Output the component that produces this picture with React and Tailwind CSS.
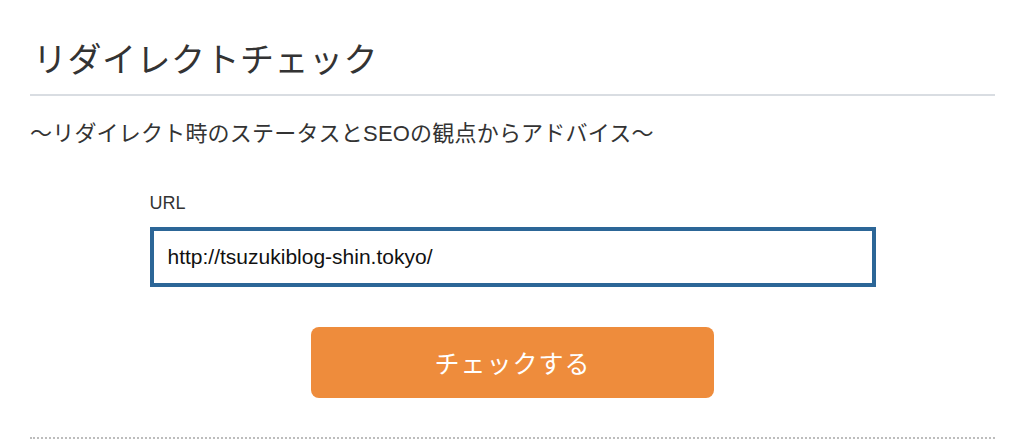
export default function App() {
  return (
    <div className="w-[1024px] h-[440px] overflow-hidden bg-white font-['Noto_Sans_CJK_JP','Noto_Sans',sans-serif]">
      <div className="ml-[30px] w-[965px]">
        <h1 className="h-[96px] pt-[32px] pb-[10px] pl-[3px] text-[34px] leading-[52px] font-normal tracking-[0.5px] text-[#333333] border-b-2 border-[#d9dde2]">
          リダイレクトチェック
        </h1>
        <p className="mt-[20px] flex h-[30px] items-baseline overflow-hidden text-[22px] leading-[30px] tracking-[0.2px] text-[#333333]">
          <span>〜リダイレクト時のステータスと</span>
          <span className="font-['Liberation_Sans',sans-serif]">SEO</span>
          <span>の観点からアドバイス〜</span>
        </p>
        <div className="mx-auto mt-[45px] w-[726px] font-['Liberation_Sans','Noto_Sans_CJK_JP',sans-serif]">
          <div className="h-[24px] text-[18px] leading-[24px] text-[#333333]">URL</div>
          <div className="mt-[12px] flex h-[60px] items-center border-4 border-[#2c6697] pl-[14px] text-[21px] text-[#111111]">
            http://tsuzukiblog-shin.tokyo/
          </div>
        </div>
        <div className="mt-[40px] flex justify-center">
          <button className="h-[71px] w-[403px] rounded-[8px] bg-[#ee8c3c] text-[25px] tracking-[1px] text-white">
            チェックする
          </button>
        </div>
        <div className="mt-[39px] border-t-2 border-dotted border-[#bdbdbd]" />
      </div>
    </div>
  );
}
